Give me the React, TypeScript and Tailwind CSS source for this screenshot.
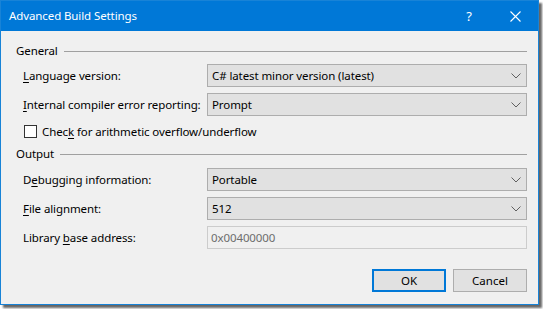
import React from "react";

const font = { fontFamily: '"Segoe UI", "Noto Sans", Arial, sans-serif' };

function Chevron() {
  return (
    <svg width="10" height="6" viewBox="0 0 10 6" className="shrink-0">
      <path d="M0.5 0.5 L5 5 L9.5 0.5" fill="none" stroke="#606060" strokeWidth="1" />
    </svg>
  );
}

function U({ children }: { children: React.ReactNode }) {
  return <span className="underline underline-offset-[2px] decoration-1">{children}</span>;
}

function Select({ value }: { value: string }) {
  return (
    <div className="w-[320px] shrink-0 h-[23px] border border-[#adadad] bg-[#e1e1e1] flex items-center justify-between pl-[4px] pr-[5px]">
      <span className="text-[11.5px] tracking-[-0.1px] text-black leading-none whitespace-nowrap">{value}</span>
      <Chevron />
    </div>
  );
}

function Row({ label, children, mt }: { label: React.ReactNode; children: React.ReactNode; mt: string }) {
  return (
    <div className={`flex items-center justify-between h-[23px] pl-[22px] ${mt}`}>
      <span className="text-[11.5px] tracking-[-0.1px] text-black leading-none whitespace-nowrap">{label}</span>
      {children}
    </div>
  );
}

function Header({ title, mt }: { title: string; mt: string }) {
  return (
    <div className={`flex items-center h-[14px] pl-[15px] ${mt}`}>
      <span className="text-[11.5px] tracking-[-0.1px] text-black leading-none">{title}</span>
      <div className="flex-1 h-px bg-[#a0a0a0] ml-[6px]" />
    </div>
  );
}

export default function App() {
  return (
    <div className="w-[543px] h-[309px] bg-white" style={font}>
      <div className="w-[539px] h-[305px] border border-[#1883d7] bg-[#f0f0f0] shadow-[3px_3px_2px_rgba(0,0,0,0.6)] flex flex-col">
        <div className="h-[30px] bg-[#0078d7] flex items-center text-white shrink-0">
          <span className="text-[11.5px] tracking-[-0.1px] pl-[8px] flex-1 leading-none">Advanced Build Settings</span>
          <span className="text-[13px] w-[46px] text-center leading-none">?</span>
          <div className="w-[46px] flex justify-center">
            <svg width="11" height="11" viewBox="0 0 11 11">
              <path d="M0.5 0.5 L10.5 10.5 M10.5 0.5 L0.5 10.5" stroke="white" strokeWidth="1.1" />
            </svg>
          </div>
        </div>
        <div className="flex flex-col pr-[11px]">
          <Header title="General" mt="mt-[13px]" />
          <Row label={<><U>L</U>anguage version:</>} mt="mt-[6px]">
            <Select value="C# latest minor version (latest)" />
          </Row>
          <Row label={<><U>I</U>nternal compiler error reporting:</>} mt="mt-[6px]">
            <Select value="Prompt" />
          </Row>
          <div className="flex items-center h-[13px] mt-[9px] pl-[23px]">
            <div className="w-[13px] h-[13px] border border-[#333333] bg-white shrink-0" />
            <span className="text-[11.5px] tracking-[-0.1px] text-black leading-none ml-[5px] whitespace-nowrap">
              Chec<U>k</U> for arithmetic overflow/underflow
            </span>
          </div>
          <Header title="Output" mt="mt-[9px]" />
          <Row label={<>D<U>e</U>bugging information:</>} mt="mt-[7px]">
            <Select value="Portable" />
          </Row>
          <Row label={<><U>F</U>ile alignment:</>} mt="mt-[6px]">
            <Select value="512" />
          </Row>
          <Row label={<>Library <U>b</U>ase address:</>} mt="mt-[6px]">
            <div className="w-[320px] shrink-0 h-[23px] border border-[#cccccc] bg-[#f0f0f0] flex items-center pl-[3px]">
              <span className="text-[11.5px] tracking-[-0.1px] text-[#6d6d6d] leading-none">0x00400000</span>
            </div>
          </Row>
          <div className="flex justify-end gap-[7px] mt-[20px]">
            <div className="w-[74px] h-[23px] border-2 border-[#0078d7] bg-[#e1e1e1] flex items-center justify-center text-[11.5px] text-black leading-none">
              OK
            </div>
            <div className="w-[74px] h-[23px] border border-[#adadad] bg-[#e1e1e1] flex items-center justify-center text-[11.5px] text-black leading-none">
              Cancel
            </div>
          </div>
        </div>
      </div>
    </div>
  );
}
